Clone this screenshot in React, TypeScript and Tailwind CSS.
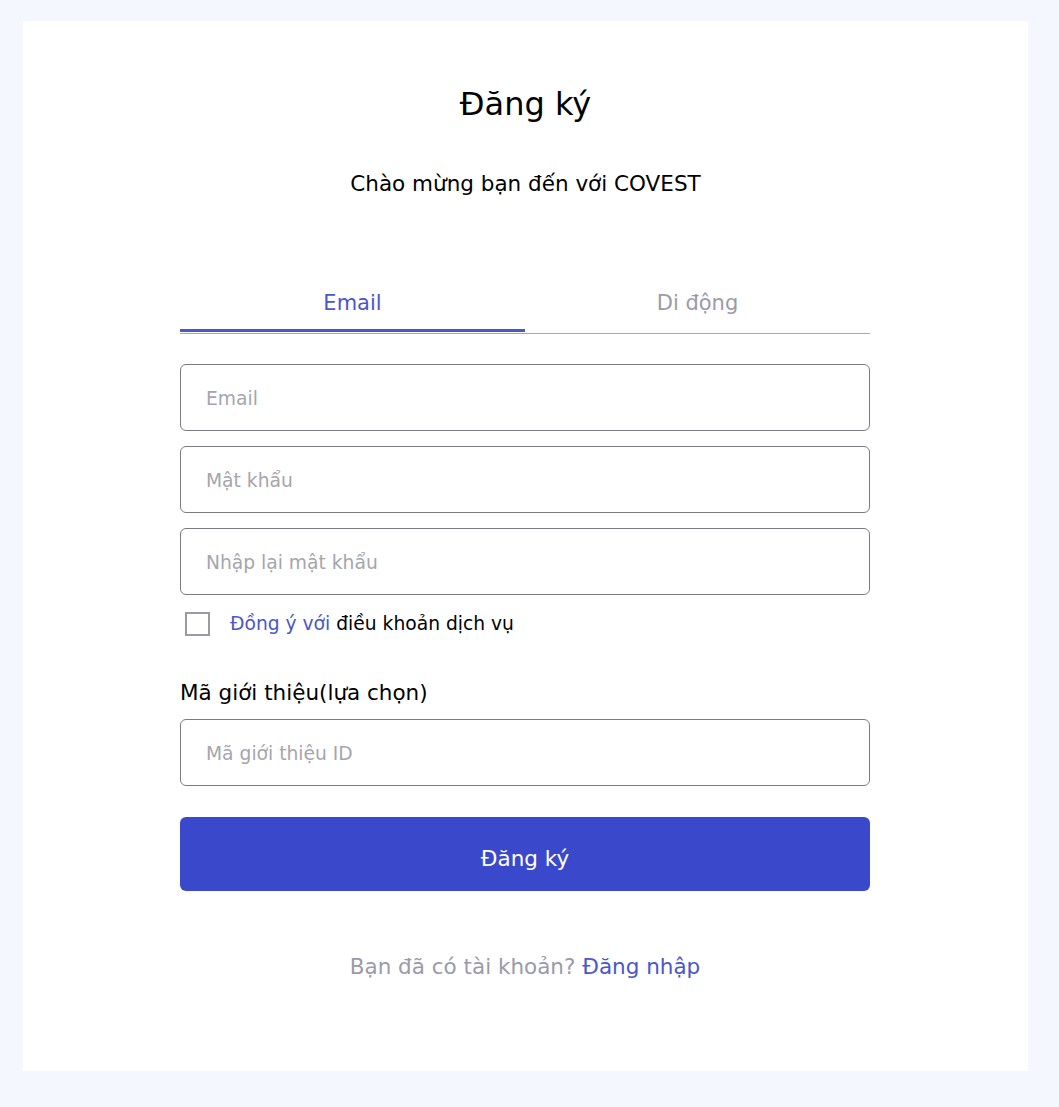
import React from 'react'

const font = { fontFamily: '"DejaVu Sans", "Liberation Sans", sans-serif' }

export default function App() {
  return (
    <div className="min-h-[1107px] bg-[#f4f7fe] px-[23px] pt-[21px] pb-[36px]" style={font}>
      <div className="bg-white w-[1005px] h-[1050px] flex flex-col items-center pt-[63px]">
        <h1 className="text-[32px] leading-[40px] text-black">Đăng ký</h1>
        <p className="mt-[45px] text-[21.5px] leading-[30px] text-black">Chào mừng bạn đến với COVEST</p>

        <div className="self-stretch pl-[157px] pr-[158px] mt-[89px]">
          <div className="flex border-b border-[#a8a8b0]">
            <div className="flex-1 text-center text-[21px] leading-[30px] text-[#4a56cc] pb-[11px] border-b-[3px] border-[#4a56cc] mb-px">
              Email
            </div>
            <div className="flex-1 text-center text-[21px] leading-[30px] text-[#9b9ba8] pb-[15px]">Di động</div>
          </div>

          <div className="flex flex-col gap-[15px] mt-[30px]">
            <Field placeholder="Email" />
            <Field placeholder="Mật khẩu" />
            <Field placeholder="Nhập lại mật khẩu" />
          </div>

          <label className="flex items-center mt-[17px] ml-[5px] text-[18.7px] leading-[24px]">
            <span className="w-[25px] h-[24px] border-2 border-[#9a9aa2] bg-white" />
            <span className="ml-[20px] text-[#4a56cc]">Đồng ý với</span>
            <span className="ml-[6px] text-black">điều khoản dịch vụ</span>
          </label>

          <div className="mt-[42px] text-[21.5px] leading-[30px] text-black">Mã giới thiệu(lựa chọn)</div>
          <div className="mt-[11px]">
            <Field placeholder="Mã giới thiệu ID" />
          </div>

          <button className="mt-[31px] w-full h-[74px] pt-[10px] rounded-[6px] bg-[#3a49cc] text-white text-[21.5px]" style={font}>
            Đăng ký
          </button>

          <p className="mt-[61px] text-center text-[21.5px] leading-[30px] text-[#9a9aaa]">
            Bạn đã có tài khoản? <span className="text-[#4a56cc]">Đăng nhập</span>
          </p>
        </div>
      </div>
    </div>
  )
}

function Field({ placeholder }: { placeholder: string }) {
  return (
    <input
      placeholder={placeholder}
      className="w-full h-[67px] rounded-[6px] border border-[#7b7b85] px-[25px] pt-[2px] text-[18.7px] placeholder:text-[#a5a5ad] outline-none"
      style={font}
    />
  )
}
